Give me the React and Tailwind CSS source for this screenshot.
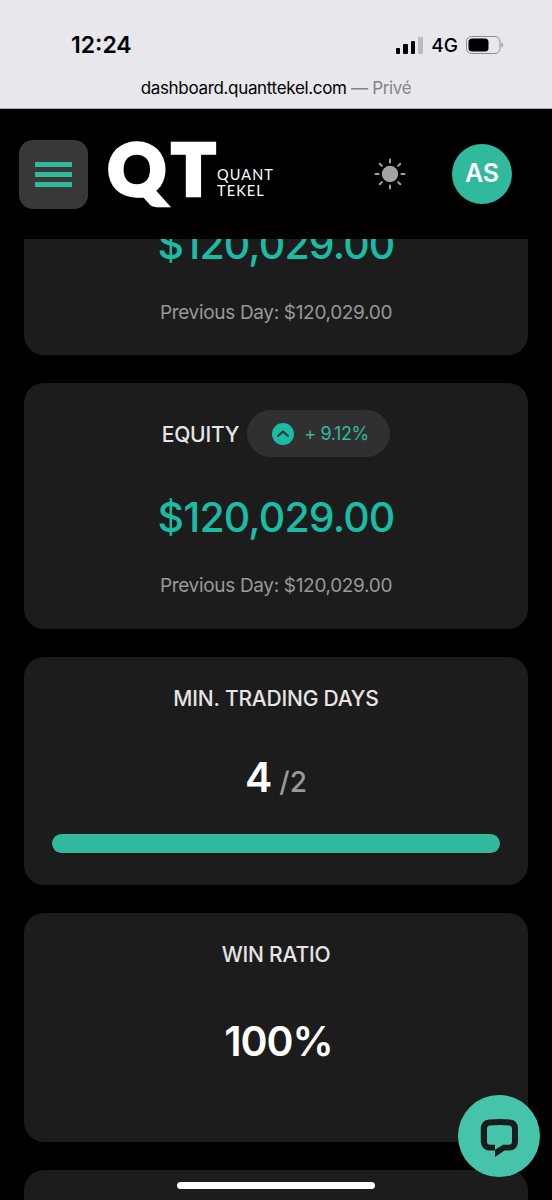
import React from 'react';

function StatusBar() {
  return (
    <div className="h-[109px] bg-[#e8e7ec] border-b border-[#a9b0b0] text-black">
      <div className="flex items-center justify-between h-[90px] pl-[71px] pr-[48px]">
        <span className="text-[23px] font-semibold leading-none">12:24</span>
        <div className="flex items-center">
          <div className="flex items-end gap-[3px] h-[17px]">
            <span className="w-[4px] h-[6px] rounded-[1px] bg-black" />
            <span className="w-[5px] h-[10px] rounded-[1px] bg-black" />
            <span className="w-[4px] h-[13px] rounded-[1px] bg-black" />
            <span className="w-[5px] h-[17px] rounded-[1px] bg-[#bcbbc0]" />
          </div>
          <span className="ml-[8px] text-[19px] font-medium leading-none">4G</span>
          <svg className="ml-[8px]" width="38" height="18" viewBox="0 0 38 18">
            <rect x="0.5" y="0.5" width="33.5" height="17" rx="5" fill="none" stroke="#8d8c91" />
            <rect x="2.5" y="2.5" width="20" height="13" rx="3.5" fill="#000" />
            <path d="M35.5 6.5c2 1 2 4 0 5z" fill="#8d8c91" />
          </svg>
        </div>
      </div>
      <div className="-mt-[12px] text-center text-[17px] leading-[20px] tracking-[-0.33px]">
        dashboard.quanttekel.com <span className="text-[#858489]">— Privé</span>
      </div>
    </div>
  );
}

function Logo() {
  return (
    <div className="flex ml-[19px] h-[72px] w-[166px] text-white font-['Lato',sans-serif]">
      <div className="flex w-[110px] shrink-0 -mt-[6px] pl-[1px] font-black text-[71px] leading-[72px] [-webkit-text-stroke:4.5px_white]">
        <span className="w-[64px]">Q</span>
        <span>T</span>
      </div>
      <span className="text-[14.5px] leading-[15.5px] tracking-[1.1px] mt-[29px]">
        QUANT
        <br />
        TEKEL
      </span>
    </div>
  );
}

function Header() {
  return (
    <header className="flex items-center h-[130px] pl-[19px] pr-[40px] bg-black">
      <button className="flex flex-col items-center justify-center gap-[5px] size-[69px] rounded-[14px] bg-[#383838]">
        <span className="w-[37px] h-[5px] bg-[#31b99d]" />
        <span className="w-[37px] h-[5px] bg-[#31b99d]" />
        <span className="w-[37px] h-[5px] bg-[#31b99d]" />
      </button>
      <Logo />
      <svg className="ml-auto" width="32" height="32" viewBox="0 0 32 32" stroke="#a3a3a3" strokeWidth="2" strokeLinecap="round">
        <circle cx="16" cy="16" r="8.2" fill="#a3a3a3" stroke="none" />
        <path d="M16 1.5v3M16 27.5v3M1.5 16h3M27.5 16h3M5.7 5.7l2.2 2.2M24.1 24.1l2.2 2.2M5.7 26.3l2.2-2.2M24.1 7.9l2.2-2.2" />
      </svg>
      <div className="flex items-center justify-center ml-[46px] size-[60px] rounded-full bg-[#31b99d] text-white text-[25px] font-semibold">
        AS
      </div>
    </header>
  );
}

function Amount({ children }) {
  return (
    <div className="text-center text-[41px] font-medium leading-[50px] tracking-[-0.85px] text-[#1abca6]">{children}</div>
  );
}

function PreviousDay({ value }) {
  return (
    <div className="text-center text-[19px] leading-[24px] tracking-[-0.33px] text-[#999999]">Previous Day: {value}</div>
  );
}

function CardTitle({ children }) {
  return (
    <h2 className="text-center text-[21px] font-medium leading-[28px] tracking-[-0.2px] text-[#e6e4e4]">{children}</h2>
  );
}

function App() {
  return (
    <div className="relative w-[552px] h-[1200px] overflow-hidden bg-black font-['Inter',sans-serif]">
      <StatusBar />
      <Header />
      <main className="flex flex-col gap-[28px] px-[24px]">
        {/* Balance card, scrolled under the header */}
        <section className="flex flex-col justify-end h-[116px] pb-[30px] shrink-0 overflow-hidden rounded-b-[20px] bg-[#1c1c1c]">
          <Amount>$120,029.00</Amount>
          <div className="h-[32px] shrink-0" />
          <PreviousDay value="$120,029.00" />
        </section>

        <section className="h-[246px] shrink-0 pt-[27px] rounded-[20px] bg-[#1c1c1c]">
          <div className="flex items-center justify-center gap-[8px]">
            <div className="pt-[2px]">
              <CardTitle>EQUITY</CardTitle>
            </div>
            <div className="flex items-center w-[143px] h-[47px] pl-[25px] rounded-full bg-[#303030]">
              <svg width="22" height="22" viewBox="0 0 22 22">
                <circle cx="11" cy="11" r="11" fill="#1abca6" />
                <path d="M6 13l5-4.5 5 4.5" fill="none" stroke="#303030" strokeWidth="2" strokeLinecap="round" strokeLinejoin="round" />
              </svg>
              <span className="ml-[10px] text-[18px] tracking-[-0.4px] whitespace-nowrap text-[#31b99d]">+ 9.12%</span>
            </div>
          </div>
          <div className="h-[35px]" />
          <Amount>$120,029.00</Amount>
          <div className="h-[32px]" />
          <PreviousDay value="$120,029.00" />
        </section>

        <section className="h-[228px] shrink-0 pt-[28px] px-[28px] rounded-[20px] bg-[#1c1c1c]">
          <CardTitle>MIN. TRADING DAYS</CardTitle>
          <div className="mt-[39px] flex items-baseline justify-center gap-[7px] leading-[50px]">
            <span className="text-[41px] font-semibold text-white">4</span>
            <span className="text-[28px] font-medium text-[#999999]">/2</span>
          </div>
          <div className="mt-[27px] h-[19px] rounded-full bg-[#31b99d]" />
        </section>

        <section className="h-[229px] shrink-0 pt-[28px] rounded-[20px] bg-[#1c1c1c]">
          <CardTitle>WIN RATIO</CardTitle>
          <div className="mt-[47px] pl-[5px] text-center text-[41px] font-semibold leading-[50px] tracking-[-1px] text-white">100%</div>
        </section>

        <section className="h-[60px] shrink-0 rounded-t-[20px] bg-[#1c1c1c]" />
      </main>

      {/* Chat launcher */}
      <button className="absolute left-[458px] top-[1095px] size-[82px] rounded-full bg-[#45c4aa]">
        <svg width="82" height="82" viewBox="0 0 82 82">
          <path
            fillRule="evenodd"
            fill="#1b1b1b"
            d="M31 24.6q10.5-1.2 21 0 7.5.9 8 8.4v14q-.5 7.7-8 8.500h-5.500L37 62v-6.500h-6q-7.500-.8-8.200-8.500V33q.7-7.500 8.200-8.400zM32 30.400q-2.800.3-3 3v13q.2 3.200 3 3.400h5v5l8-5h6q2.800-.2 3-3.400v-13q-.2-2.700-3-3-9.500-.9-19 0z"
          />
        </svg>
      </button>

      {/* Home indicator */}
      <div className="absolute left-[177px] top-[1182px] w-[198px] h-[7px] rounded-full bg-white" />
    </div>
  );
}

export default App;
